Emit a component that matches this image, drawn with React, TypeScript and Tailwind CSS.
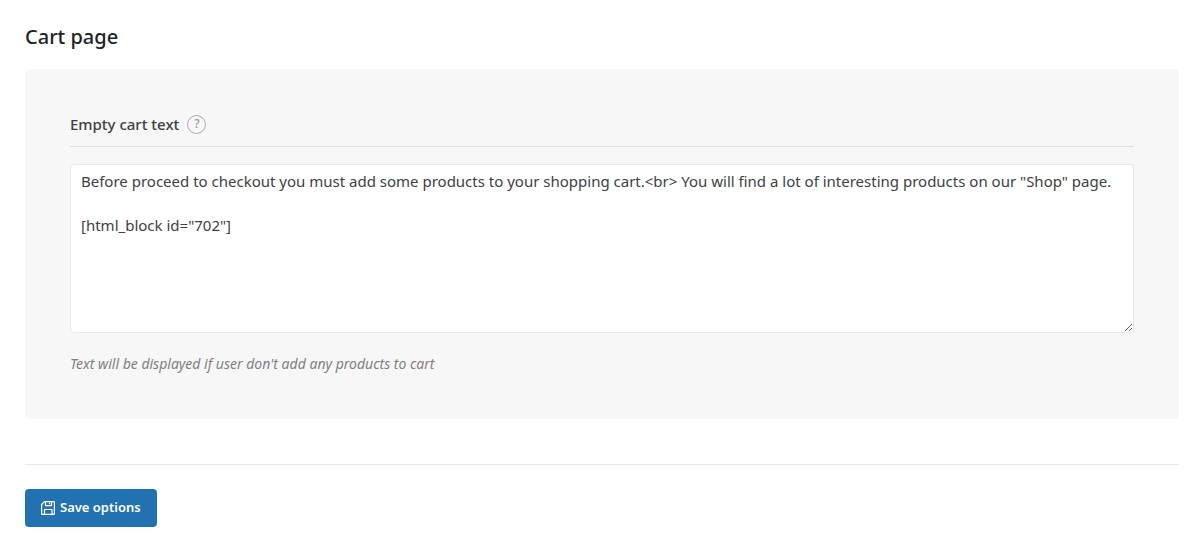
import React, { useState } from 'react';

const defaultText = `Before proceed to checkout you must add some products to your shopping cart.<br> You will find a lot of interesting products on our "Shop" page.

[html_block id="702"]`;

const SaveIcon: React.FC = () => (
  <svg
    className="h-[14px] w-[14px]"
    viewBox="0 0 14 14"
    fill="none"
    stroke="currentColor"
    strokeWidth="1.2"
    strokeLinejoin="round"
    aria-hidden="true"
  >
    <path d="M3.5.6h9.2q.7 0 .7.7v11.4q0 .7-.7.7H1.3q-.7 0-.7-.7V3.5z" />
    <path d="M4.5.6v4h6v-4" />
    <path d="M8.5 1.6v1.6" />
    <path d="M3.5 13.4V8.5h7.5v4.9" />
  </svg>
);

const App: React.FC = () => {
  const [emptyCartText, setEmptyCartText] = useState(defaultText);

  return (
    <form
      className="py-6 pr-[21px] pl-[25px] font-['Noto_Sans','Open_Sans',sans-serif] text-[#3c3f43]"
      onSubmit={(e) => e.preventDefault()}
    >
      <h1 className="mb-5 text-xl leading-[25px] font-medium text-[#1d2327]">Cart page</h1>

      <section className="rounded-[5px] bg-[#f7f7f7] px-[45px] pt-[45px] pb-11">
        {/* Field title */}
        <div className="mb-[17px] flex items-center gap-2 border-b border-[#dfdfdf] pb-3">
          <label htmlFor="empty-cart-text" className="text-[15px] leading-5 font-medium">
            Empty cart text
          </label>
          <button
            type="button"
            aria-label="Help"
            className="flex h-[19px] w-[19px] items-center justify-center rounded-full border border-[#aaa] text-xs leading-none font-medium text-[#999]"
          >
            ?
          </button>
        </div>

        <textarea
          id="empty-cart-text"
          value={emptyCartText}
          onChange={(e) => setEmptyCartText(e.target.value)}
          className="block h-[169px] w-full rounded-[4px] border border-[#e8e8e8] bg-white px-[10px] py-[5px] text-[15px] leading-[22px] outline-none"
        />

        <p className="mt-5 text-sm leading-[22px] text-[#808080] italic">
          Text will be displayed if user don't add any products to cart
        </p>
      </section>

      <div className="mt-[45px] border-t border-[#e8e8e8] pt-6">
        <button
          type="submit"
          className="flex h-[38px] items-center gap-[5px] rounded-[4px] bg-[#2271b1] px-4 text-[13px] font-semibold text-white"
        >
          <SaveIcon />
          Save options
        </button>
      </div>
    </form>
  );
};

export default App;
